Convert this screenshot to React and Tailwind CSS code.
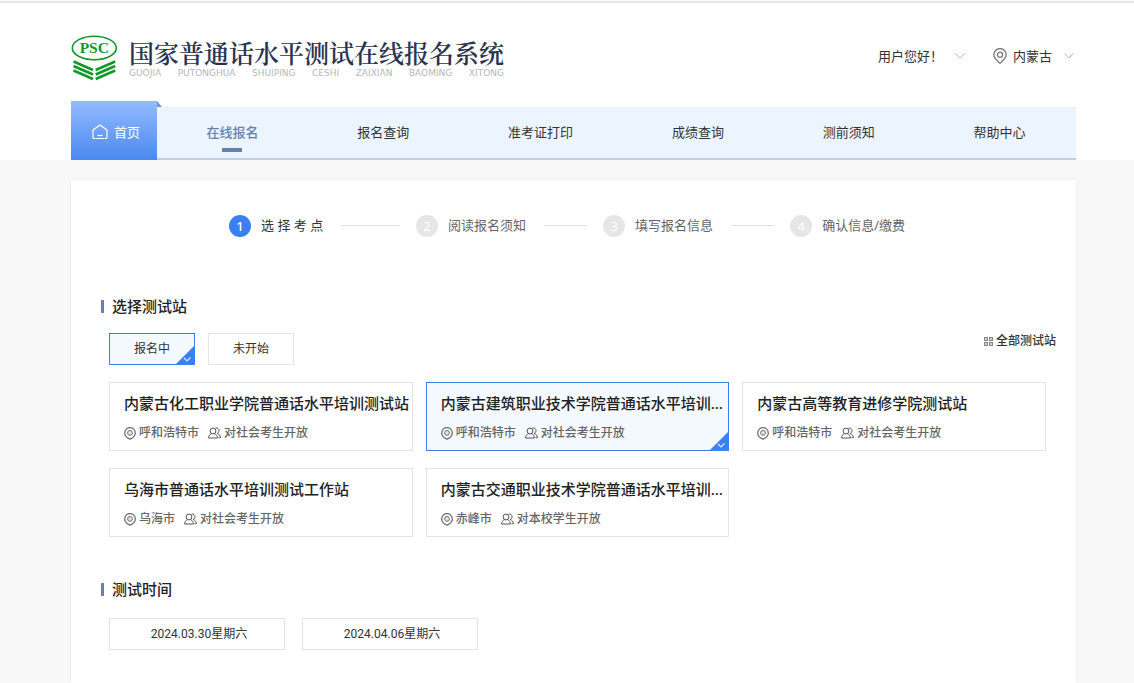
import React, { useState } from "react";

const navItems = ["在线报名", "报名查询", "准考证打印", "成绩查询", "测前须知", "帮助中心"];

const steps = ["选 择 考 点", "阅读报名须知", "填写报名信息", "确认信息/缴费"];

const stations = [
  { name: "内蒙古化工职业学院普通话水平培训测试站", city: "呼和浩特市", scope: "对社会考生开放" },
  { name: "内蒙古建筑职业技术学院普通话水平培训测试站", city: "呼和浩特市", scope: "对社会考生开放" },
  { name: "内蒙古高等教育进修学院测试站", city: "呼和浩特市", scope: "对社会考生开放" },
  { name: "乌海市普通话水平培训测试工作站", city: "乌海市", scope: "对社会考生开放" },
  { name: "内蒙古交通职业技术学院普通话水平培训测试站", city: "赤峰市", scope: "对本校学生开放" },
];

const dates = ["2024.03.30星期六", "2024.04.06星期六"];

function Logo() {
  return (
    <svg width="48" height="46" viewBox="0 0 48 46" aria-hidden="true" className="shrink-0">
      <ellipse cx="23.3" cy="13" rx="22" ry="11.8" fill="#fff" stroke="#12982a" strokeWidth="1.600" />
      <path d="M1.500 14.500C3 21 12 25.300 23.300 25.300S43.600 21 45.100 14.500C42 20.500 34 24 23.300 24S4.600 20.500 1.500 14.500Z" fill="#12982a" />
      <text x="23.3" y="18" textAnchor="middle" fill="#12982a" fontSize="15.500" fontWeight="700" fontFamily="Liberation Serif, serif">
        PSC
      </text>
      <g fill="none" stroke="#12982a" strokeWidth="2.600">
        <path d="M2.500 26.500L22 35M2.500 31L22 39.500M2.500 35.500L22 44" />
        <path d="M44.200 26.500L24.700 35M44.200 31L24.700 39.500M44.200 35.500L24.700 44" />
      </g>
    </svg>
  );
}

function Chevron() {
  return (
    <svg width="10" height="6" viewBox="0 0 10 6" fill="none" stroke="#b4bac6" aria-hidden="true">
      <path d="M0.500 0.500L5 5L9.500 0.500" />
    </svg>
  );
}

function LargePin() {
  return (
    <svg width="14" height="16" viewBox="0 0 14 16" fill="none" stroke="#777" strokeWidth="1.300" aria-hidden="true">
      <path d="M7 15.200C5.500 13.800 0.800 10.500 0.800 6.800a6.200 6.200 0 0 1 12.400 0C13.200 10.500 8.500 13.800 7 15.200Z" />
      <circle cx="7" cy="6.800" r="2.600" />
    </svg>
  );
}

function Pin() {
  return (
    <svg width="12" height="13" viewBox="0 0 12 13" fill="none" stroke="#707070" aria-hidden="true" className="shrink-0">
      <path d="M6 12.200C4.500 11.500 0.700 9.400 0.700 5.900a5.300 5.300 0 0 1 10.600 0C11.300 9.400 7.500 11.500 6 12.200Z" strokeWidth="1.300" />
      <circle cx="6" cy="5.900" r="2.400" fill="#e4e4e4" />
    </svg>
  );
}

function People() {
  return (
    <svg width="13" height="12" viewBox="0 0 13 12" fill="none" stroke="#555" aria-hidden="true" className="shrink-0">
      <circle cx="5" cy="4" r="2.900" />
      <path d="M3.500 6.800C1.700 7.500 0.600 8.800 0.600 11H9.400C9.400 8.800 8.300 7.500 6.500 6.800" />
      <path d="M7.500 1.100C9.500 0.500 11 2 11 3.700C11 5.200 10 6.200 9 6.500C11 7 12.300 8.500 12.400 10.700H10.500" />
    </svg>
  );
}

function Corner() {
  return (
    <svg width="18" height="18" viewBox="0 0 18 18" aria-hidden="true" className="absolute right-0 bottom-0">
      <path d="M18 0V18H0Z" fill="#3a80f2" />
      <path d="M8 12L11 15L14.500 11.500" fill="none" stroke="#dbe8ff" strokeWidth="1.200" />
    </svg>
  );
}

function Choice({ selected, onSelect, className, children }) {
  return (
    <button
      type="button"
      aria-pressed={selected}
      onClick={onSelect}
      className={
        "relative border text-[#333] " +
        (selected ? "border-[#3a80f2] bg-[#f4f8ff] " : "border-[#e4e4e4] bg-white ") +
        className
      }
    >
      {children}
      {selected && <Corner />}
    </button>
  );
}

function SectionTitle({ children }) {
  return (
    <h2 className="flex items-center gap-2 text-[15px] leading-5 font-medium text-[#222]">
      <span className="h-[13px] w-[3px] bg-[#6780ad]" />
      {children}
    </h2>
  );
}

export default function App() {
  const [status, setStatus] = useState(0);
  const [station, setStation] = useState(1);
  const [date, setDate] = useState(-1);

  return (
    <div className="flex min-h-screen flex-col bg-[#f8f8f8] pt-px font-['Noto_Sans','Noto_Sans_CJK_SC',sans-serif] text-[13px] leading-5 text-[#333]">
      <header className="border-t-2 border-[#e8e8e8] bg-white pr-[58px] pl-[71px]">
        <div className="flex h-[98px] items-center justify-between pt-2">
          <a href="#" className="flex items-center gap-[10px] pt-1">
            <Logo />
            <span className="flex flex-col gap-[2px]">
              <span className="font-['Noto_Serif_CJK_SC','Noto_Sans_CJK_SC',serif] text-[25px] leading-7 font-semibold text-[#2a3450]">
                国家普通话水平测试在线报名系统
              </span>
              <span className="flex justify-between font-['DejaVu_Sans',sans-serif] text-[9px] leading-[10px] text-[#b4b7be]">
                {"GUOJIA PUTONGHUA SHUIPING CESHI ZAIXIAN BAOMING XITONG".split(" ").map((w) => (
                  <span key={w}>{w}</span>
                ))}
              </span>
            </span>
          </a>
          <div className="flex items-center gap-7 pr-[2px]">
            <button type="button" className="flex items-center gap-3">
              用户您好！
              <Chevron />
            </button>
            <button type="button" className="flex items-center gap-[6px]">
              <LargePin />
              <span className="pr-[6px]">内蒙古</span>
              <Chevron />
            </button>
          </div>
        </div>
        <nav className="flex h-[59px] items-end">
          <a
            href="#"
            className="relative flex h-full w-[86px] shrink-0 items-center justify-center gap-[6px] bg-linear-to-b from-[#94bbff] to-[#4a88f0] pt-[3px] pl-1 text-white"
          >
            <svg width="16" height="16" viewBox="0 0 16 16" fill="none" stroke="#fff" strokeWidth="1.200" aria-hidden="true">
              <path d="M1 6L8 1L15 6V13.500Q15 14.500 14 14.500H2Q1 14.500 1 13.500Z" strokeLinejoin="round" />
              <path d="M5.500 11.500H10.500" />
            </svg>
            首页
            <svg width="5" height="6" viewBox="0 0 5 6" aria-hidden="true" className="absolute top-0 left-full">
              <path d="M0 0L5 6H0Z" fill="#6d97dc" />
            </svg>
          </a>
          <div className="flex h-[53px] grow border-b-2 border-[#bfcee6] bg-[#ecf5ff] pr-px pb-[2px]">
            {navItems.map((item, i) => (
              <a
                key={item}
                href="#"
                className={
                  "relative flex flex-auto items-center justify-center " +
                  (i === 0 ? "font-medium text-[#6780ad]" : "")
                }
              >
                {item}
                {i === 0 && <span className="absolute bottom-1 h-1 w-5 bg-[#6780ad]" />}
              </a>
            ))}
          </div>
        </nav>
      </header>

      <main className="mt-5 mr-[58px] ml-[71px] grow bg-white pr-[30px] pb-8 pl-[30px] shadow-[0_0_2px_rgba(0,0,0,0.08)]">
        <ol className="flex pt-[35px] pr-[141px] pl-32">
          {steps.map((step, i) => (
            <li key={step} className={"flex items-center " + (i < 3 ? "flex-1" : "")}>
              <span
                className={
                  "flex size-[22px] shrink-0 items-center justify-center rounded-full text-white " +
                  (i === 0 ? "bg-[#3a80f2] font-medium" : "bg-[#e6e6e6]")
                }
              >
                {i + 1}
              </span>
              <span className={"ml-[10px] pb-[2px] whitespace-nowrap " + (i === 0 ? "text-[#333]" : "text-[#666]")}>
                {step}
              </span>
              {i < 3 && <span className="mr-4 mb-[2px] ml-[18px] h-px grow bg-[#e0e0e0]" />}
            </li>
          ))}
        </ol>

        <section className="pt-[59px]">
          <SectionTitle>选择测试站</SectionTitle>
          <div className="flex gap-[13px] pt-[17px] pl-2">
            {["报名中", "未开始"].map((label, i) => (
              <Choice key={label} selected={status === i} onSelect={() => setStatus(i)} className="h-8 w-[86px] text-xs">
                {label}
              </Choice>
            ))}
            <button type="button" className="-mr-[10px] ml-auto flex h-4 items-center gap-[3px] text-xs font-medium">
              <svg width="9" height="9" viewBox="0 0 9 9" fill="none" stroke="#888" strokeWidth="1.200" aria-hidden="true">
                <path d="M0.600 0.600h2.800v2.800h-2.800zM5.600 0.600h2.800v2.800h-2.800zM0.600 5.600h2.800v2.800h-2.800zM5.600 5.600h2.800v2.800h-2.800z" />
              </svg>
              全部测试站
            </button>
          </div>
          <div className="grid grid-cols-3 gap-x-[13px] gap-y-[17px] pt-[17px] pl-2">
            {stations.map((s, i) => (
              <Choice
                key={s.name}
                selected={station === i}
                onSelect={() => setStation(i)}
                className="flex h-[69px] min-w-0 flex-col justify-center gap-[9px] pt-[2px] pl-[14px] text-left"
              >
                <span className="block w-full truncate text-[15px] leading-[22px] font-medium text-[#222]">{s.name}</span>
                <span className="flex items-center text-xs leading-5 font-medium text-[#666]">
                  <Pin />
                  <span className="mr-[9px] ml-[3px]">{s.city}</span>
                  <People />
                  <span className="ml-[3px]">{s.scope}</span>
                </span>
              </Choice>
            ))}
          </div>
        </section>

        <section className="pt-[42px]">
          <SectionTitle>测试时间</SectionTitle>
          <div className="flex gap-[17px] pt-[19px] pl-2">
            {dates.map((d, i) => (
              <Choice
                key={d}
                selected={date === i}
                onSelect={() => setDate(i)}
                className="h-8 w-44 pl-1 font-['Roboto','Noto_Sans_CJK_SC',sans-serif] text-xs"
              >
                {d}
              </Choice>
            ))}
          </div>
        </section>
      </main>
    </div>
  );
}
